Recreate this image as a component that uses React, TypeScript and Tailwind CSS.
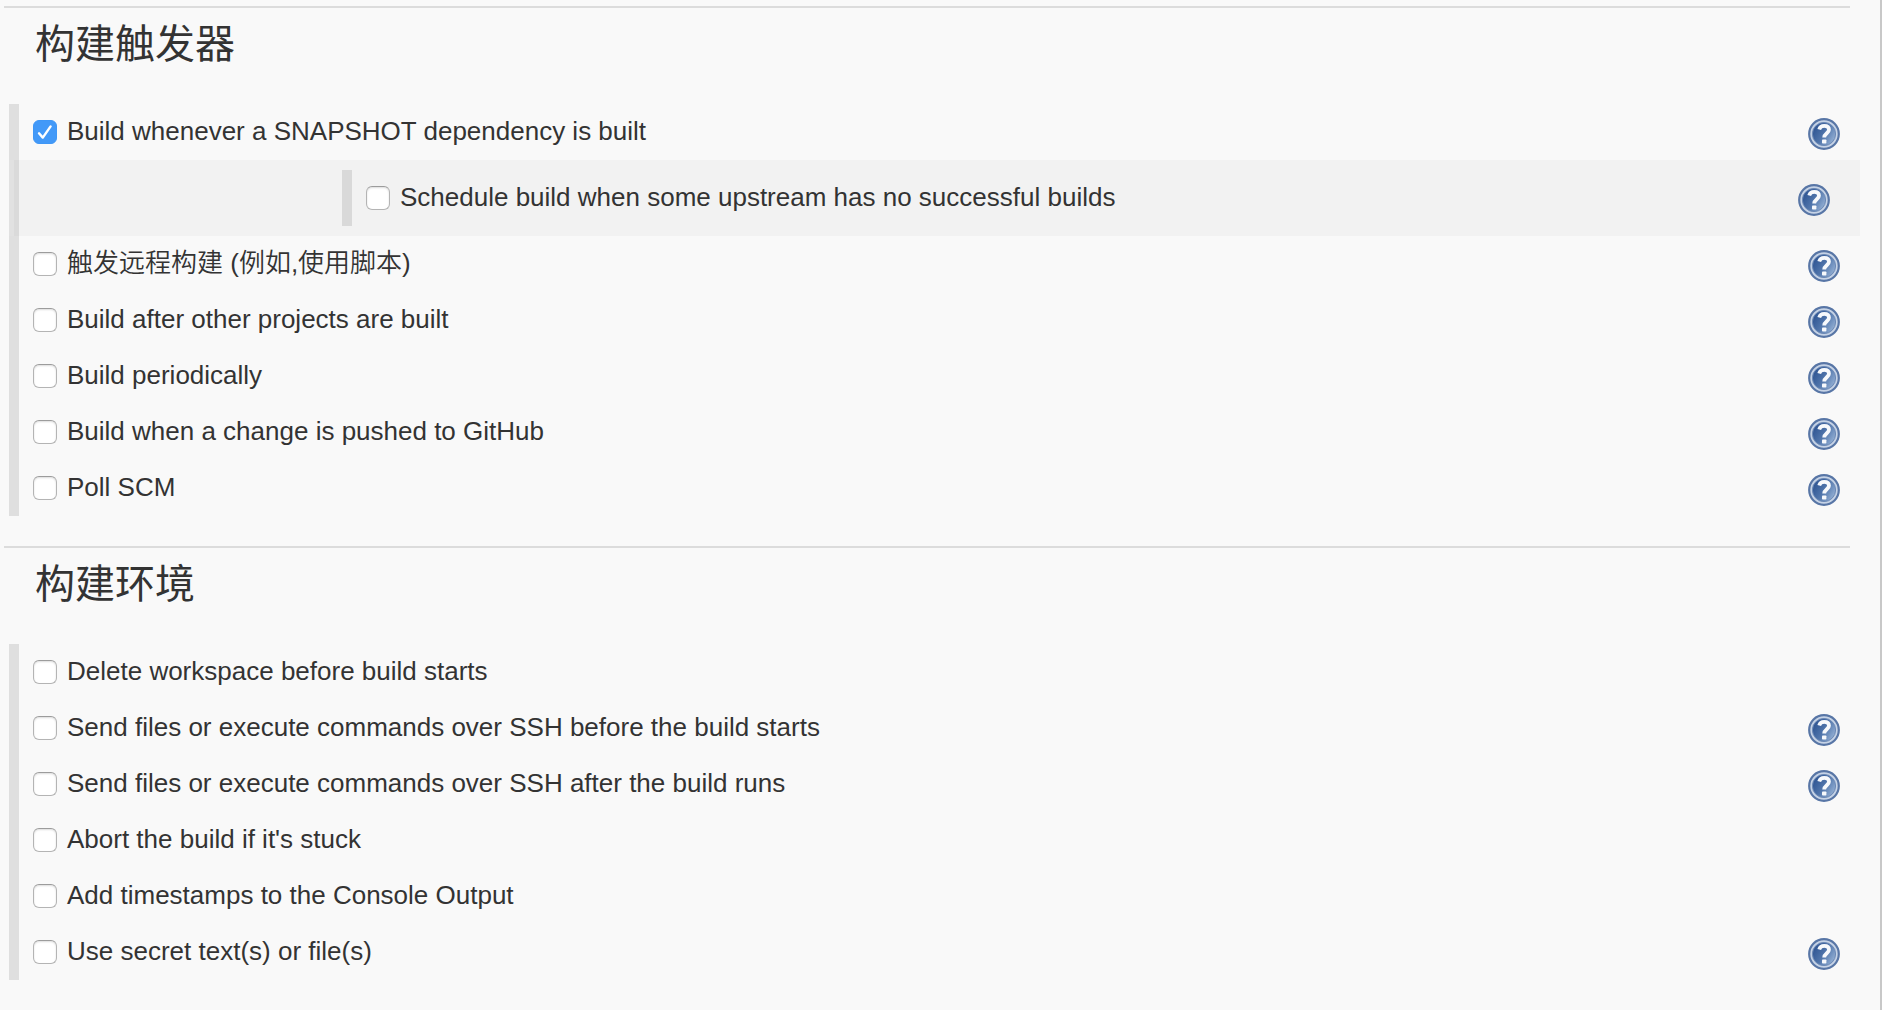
import { useState } from "react";

type Option = {
  label: string;
  help?: boolean;
  checked?: boolean;
  nested?: Option;
};

const triggers: Option[] = [
  {
    label: "Build whenever a SNAPSHOT dependency is built",
    help: true,
    checked: true,
    nested: {
      label: "Schedule build when some upstream has no successful builds",
      help: true,
    },
  },
  { label: "触发远程构建 (例如,使用脚本)", help: true },
  { label: "Build after other projects are built", help: true },
  { label: "Build periodically", help: true },
  { label: "Build when a change is pushed to GitHub", help: true },
  { label: "Poll SCM", help: true },
];

const environment: Option[] = [
  { label: "Delete workspace before build starts" },
  { label: "Send files or execute commands over SSH before the build starts", help: true },
  { label: "Send files or execute commands over SSH after the build runs", help: true },
  { label: "Abort the build if it's stuck" },
  { label: "Add timestamps to the Console Output" },
  { label: "Use secret text(s) or file(s)", help: true },
];

function HelpIcon() {
  return (
    <svg viewBox="0 0 32 32" className="size-8" aria-hidden="true">
      <defs>
        <linearGradient id="help-fill" x1="0" y1="0.2" x2="1" y2="0.8">
          <stop offset="0" stopColor="#2a5190" />
          <stop offset="0.5" stopColor="#5075ab" />
          <stop offset="1" stopColor="#9ab5d8" />
        </linearGradient>
      </defs>
      <circle cx="16" cy="16" r="14.8" fill="#c6d3e6" stroke="#5876a6" strokeWidth="2.2" />
      <circle cx="16" cy="16" r="11.6" fill="url(#help-fill)" stroke="#6d8ab6" strokeWidth="1" />
      <path
        d="M11.2 11.4 C12 8.6 14 7.8 16.2 7.8 C19.2 7.8 21 9.4 21 11.8 C21 15.2 16.2 15.4 16.2 19.6"
        fill="none"
        stroke="#f7f9fc"
        strokeWidth="3.8"
      />
      <rect x="14" y="21.4" width="4.4" height="4.2" rx="0.8" fill="#f7f9fc" />
    </svg>
  );
}

function OptionRow({ option }: { option: Option }) {
  const [checked, setChecked] = useState(Boolean(option.checked));
  return (
    <div className="flex h-14 items-center justify-between border-l-10 border-black/10 pl-3.5">
      <label className="flex items-center gap-2.5 text-[26px] leading-7 font-[350]">
        <span className="grid size-6 shrink-0">
          <input
            type="checkbox"
            checked={checked}
            onChange={(e) => setChecked(e.target.checked)}
            className="peer col-start-1 row-start-1 size-6 appearance-none rounded-md border border-[#b4b4b4] border-t-[#9c9c9c] bg-white shadow-[inset_0_1px_2px_rgba(0,0,0,0.14)] checked:border-[#3f97f6] checked:bg-[#4299f8] checked:shadow-none"
          />
          <svg
            viewBox="0 0 24 24"
            className="pointer-events-none invisible col-start-1 row-start-1 size-6 peer-checked:visible"
            aria-hidden="true"
          >
            <path
              d="M6 13.3 L9.8 17.6 L17.6 6.4"
              fill="none"
              stroke="#ffffff"
              strokeWidth="2.4"
              strokeLinecap="round"
              strokeLinejoin="round"
            />
          </svg>
        </span>
        <span className="pb-0.5">{option.label}</span>
      </label>
      {option.help && (
        <button type="button" aria-label={"Help: " + option.label} className="mt-1 mr-2.5">
          <HelpIcon />
        </button>
      )}
    </div>
  );
}

function Section({ title, options }: { title: string; options: Option[] }) {
  return (
    <section className="mb-[30px]">
      <div className="mr-[30px] ml-1 h-0.5 bg-[#dcdcdc]" />
      <h2 className="flex h-24 items-start pt-2 pl-[35px] text-[40px] leading-[56px] font-normal">{title}</h2>
      <div className="ml-[9px]">
        {options.map((option) => (
          <div key={option.label}>
            <div className="mr-[30px]">
              <OptionRow option={option} />
            </div>
            {option.nested && (
              <div className="flex border-l-10 border-[#e1e1e1]">
                <div className="-ml-[5px] mr-5 flex-1 bg-black/[0.028] py-2.5 pr-5 pl-[328px]">
                  <OptionRow option={option.nested} />
                </div>
              </div>
            )}
          </div>
        ))}
      </div>
    </section>
  );
}

export default function App() {
  return (
    <main className="min-h-screen border-r-2 border-[#c8c8c8] bg-[#f9f9f9] pt-1.5 font-['Liberation_Sans','Noto_Sans_CJK_SC',sans-serif] text-[#333333]">
      <Section title="构建触发器" options={triggers} />
      <Section title="构建环境" options={environment} />
    </main>
  );
}
